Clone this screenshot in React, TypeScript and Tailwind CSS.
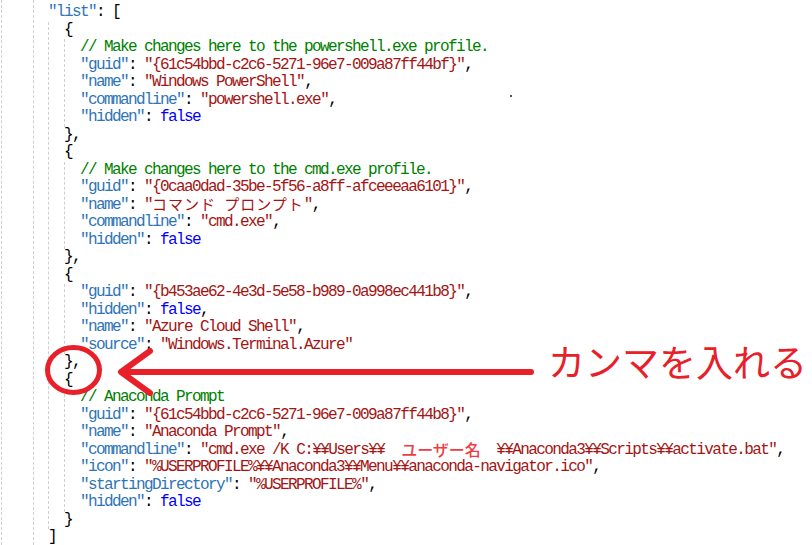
import type { ReactNode } from "react";

const mono = "font-['Liberation_Mono','Noto_Sans_CJK_JP',monospace]";

// token helpers
const K = ({ c }: { c: string }) => <span className="text-[#2f75b5]">"{c}"</span>;
const S = ({ children }: { children: ReactNode }) => (
  <span className="text-[#a31515]">"{children}"</span>
);
const F = ({ c = "false" }: { c?: string }) => <span className="text-[#0000ff]">{c}</span>;
const C = ({ c }: { c: string }) => <span className="text-[#008000]">{c}</span>;
// full-width text: 16px per glyph, baseline matched to the mono font
const J = ({ c }: { c: string }) => (
  <span className="inline-block h-[17.5px] align-top font-['Noto_Sans_CJK_JP',sans-serif] text-[15px] leading-[13px] tracking-[1px]">
    {c}
  </span>
);

function Line({ children }: { children?: ReactNode }) {
  return <div className="h-[17.5px] leading-[17.5px] whitespace-pre">{children}</div>;
}

function Block({ open = "{", close, children }: { open?: string; close: string; children: ReactNode }) {
  return (
    <div>
      <Line>{open}</Line>
      <div className="border-l border-dashed border-[#cfcfcf] pl-[15px]">{children}</div>
      <Line>{close}</Line>
    </div>
  );
}

export default function App() {
  return (
    <div className={`relative w-[812px] h-[545px] overflow-hidden bg-white text-black text-[16px] tracking-[-1.6px] ${mono}`}>
      <div className="h-full pl-[1px]">
        <div className="h-full border-l border-dashed border-[#cfcfcf] pl-[31px]">
          <div className="h-full border-l border-dashed border-[#cfcfcf] pl-[14px] pt-[4px]">
            <Line>
              <K c="list" />: [
            </Line>
            <div className="border-l border-dashed border-[#cfcfcf] pl-[15px]">
              <Block close="},">
                <Line>
                  <C c="// Make changes here to the powershell.exe profile." />
                </Line>
                <Line>
                  <K c="guid" />: <S>{"{61c54bbd-c2c6-5271-96e7-009a87ff44bf}"}</S>,
                </Line>
                <Line>
                  <K c="name" />: <S>Windows PowerShell</S>,
                </Line>
                <Line>
                  <K c="commandline" />: <S>powershell.exe</S>,
                </Line>
                <Line>
                  <K c="hidden" />: <F />
                </Line>
              </Block>
              <Block close="},">
                <Line>
                  <C c="// Make changes here to the cmd.exe profile." />
                </Line>
                <Line>
                  <K c="guid" />: <S>{"{0caa0dad-35be-5f56-a8ff-afceeeaa6101}"}</S>,
                </Line>
                <Line>
                  <K c="name" />:{" "}
                  <S>
                    <J c="コマンド" /> <J c="プロンプト" />
                  </S>
                  ,
                </Line>
                <Line>
                  <K c="commandline" />: <S>cmd.exe</S>,
                </Line>
                <Line>
                  <K c="hidden" />: <F />
                </Line>
              </Block>
              <Block close="},">
                <Line>
                  <K c="guid" />: <S>{"{b453ae62-4e3d-5e58-b989-0a998ec441b8}"}</S>,
                </Line>
                <Line>
                  <K c="hidden" />: <F />,
                </Line>
                <Line>
                  <K c="name" />: <S>Azure Cloud Shell</S>,
                </Line>
                <Line>
                  <K c="source" />: <S>Windows.Terminal.Azure</S>
                </Line>
              </Block>
              <Block close="}">
                <Line>
                  <C c="// Anaconda Prompt" />
                </Line>
                <Line>
                  <K c="guid" />: <S>{"{61c54bbd-c2c6-5271-96e7-009a87ff44b8}"}</S>,
                </Line>
                <Line>
                  <K c="name" />: <S>Anaconda Prompt</S>,
                </Line>
                <Line>
                  <K c="commandline" />:{" "}
                  <S>
                    cmd.exe /K C:¥¥Users¥¥
                    <span className="inline-block h-[17.5px] w-[112px] pl-[17px] align-top font-['Noto_Sans_CJK_JP',sans-serif] text-[16px] font-medium tracking-normal leading-[15px] text-[#ef3d44]">
                      ユーザー名
                    </span>
                    ¥¥Anaconda3¥¥Scripts¥¥activate.bat
                  </S>
                  ,
                </Line>
                <Line>
                  <K c="icon" />: <S>%USERPROFILE%¥¥Anaconda3¥¥Menu¥¥anaconda-navigator.ico</S>,
                </Line>
                <Line>
                  <K c="startingDirectory" />: <S>%USERPROFILE%</S>,
                </Line>
                <Line>
                  <K c="hidden" />: <F />
                </Line>
              </Block>
            </div>
            <Line>]</Line>
          </div>
        </div>
      </div>

      {/* stray dot */}
      <div className="absolute left-[510px] top-[95px] h-[2px] w-[2px] bg-[#555]" />

      {/* annotation: circle + arrow */}
      <svg className="absolute left-0 top-0" width="812" height="545" fill="none">
        <ellipse cx="73.5" cy="370" rx="26" ry="22.5" stroke="#e8202a" strokeWidth="5" />
        <path d="M123 372 H531" stroke="#e8202a" strokeWidth="6" strokeLinecap="round" />
        <path d="M150 351 L121 372 L150 393" stroke="#e8202a" strokeWidth="6" strokeLinecap="round" strokeLinejoin="round" />
      </svg>

      <div className="absolute left-[548px] top-[343px] font-['Noto_Sans_CJK_JP',sans-serif] text-[37px] leading-none tracking-normal text-[#e8202a]">
        カンマを入れる
      </div>
    </div>
  );
}
